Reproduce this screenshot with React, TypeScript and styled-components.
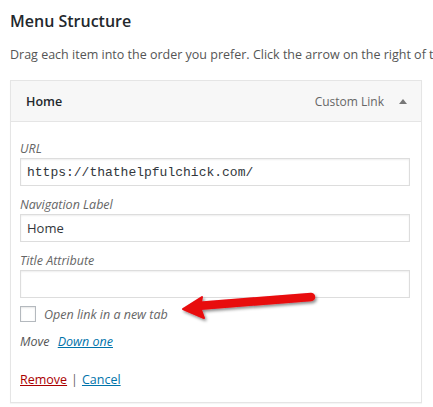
import styled, { createGlobalStyle } from 'styled-components';

const GlobalStyle = createGlobalStyle`
  html, body {
    margin: 0;
    padding: 0;
    background: #fff;
  }
  body {
    font-family: "Open Sans", "Noto Sans", sans-serif;
    color: #23282d;
    overflow: hidden;
  }
`;

const Page = styled.div`
  position: relative;
  width: 433px;
  height: 407px;
  padding: 0 0 0 10px;
  box-sizing: border-box;
  overflow: hidden;
`;

const Heading = styled.h2`
  margin: 0;
  padding-top: 10px;
  font-size: 16px;
  font-weight: 600;
  line-height: 22px;
  color: #23282d;
`;

const Intro = styled.p`
  margin: 14px 0 0;
  font-size: 12.5px;
  line-height: 18px;
  color: #555;
  white-space: nowrap;
`;

const ItemBox = styled.div`
  margin-top: 16px;
  width: 412px;
  border: 1px solid #e5e5e5;
  box-sizing: border-box;
  background: #fff;
  box-shadow: 0 1px 1px rgba(0, 0, 0, 0.04);
`;

const ItemBar = styled.div`
  display: flex;
  align-items: center;
  height: 40px;
  padding: 0 14px 0 15px;
  background: #f7f7f7;
  border-bottom: 1px solid #e5e5e5;
`;

const ItemTitle = styled.span`
  flex: 1;
  font-size: 12.5px;
  font-weight: 600;
  color: #23282d;
`;

const ItemType = styled.span`
  font-size: 12px;
  color: #666;
`;

const Caret = styled.span`
  margin-left: 15px;
  width: 0;
  height: 0;
  border-left: 4px solid transparent;
  border-right: 4px solid transparent;
  border-bottom: 5px solid #777;
`;

const ItemSettings = styled.div`
  padding: 18px 11px 13px 9px;
`;

const Field = styled.label`
  display: block;
  margin-bottom: 10px;
`;

const FieldLabel = styled.span`
  display: block;
  font-size: 12.5px;
  font-style: italic;
  line-height: 18px;
  color: #666;
`;

const TextInput = styled.input<{ $mono?: boolean }>`
  display: block;
  width: 100%;
  height: 28px;
  box-sizing: border-box;
  margin: 0;
  padding: 0 6px;
  border: 1px solid #ddd;
  border-radius: 0;
  box-shadow: inset 0 1px 2px rgba(0, 0, 0, 0.07);
  background: #fff;
  font-family: ${({ $mono }) => ($mono ? '"Liberation Mono", "DejaVu Sans Mono", monospace' : '"Open Sans", sans-serif')};
  font-size: 13px;
  color: #32373c;
  outline: none;
`;

const CheckRow = styled.label`
  display: flex;
  align-items: center;
  gap: 8px;
  height: 18px;
  margin-top: -3px;
`;

const CheckBox = styled.span`
  width: 16px;
  height: 16px;
  box-sizing: border-box;
  border: 1px solid #b4b9be;
  background: #fff;
  box-shadow: inset 0 1px 2px rgba(0, 0, 0, 0.1);
`;

const CheckText = styled.span`
  font-size: 12.5px;
  font-style: italic;
  color: #666;
`;

const MoveRow = styled.div`
  margin-top: 10px;
  font-size: 12.5px;
  font-style: italic;
  color: #555;
  line-height: 18px;
`;

const TextLink = styled.a<{ $danger?: boolean }>`
  color: ${({ $danger }) => ($danger ? '#a00' : '#0073aa')};
  text-decoration: underline;
  cursor: pointer;
`;

const MoveLink = styled(TextLink)`
  margin-left: 5px;
`;

const Actions = styled.div`
  margin-top: 20px;
  font-size: 12.5px;
  line-height: 18px;
  color: #666;
`;

const Sep = styled.span`
  margin: 0 4px;
`;

const Annotation = styled.svg`
  position: absolute;
  left: 175px;
  top: 287px;
  pointer-events: none;
`;

export default function App() {
  return (
    <>
      <GlobalStyle />
      <Page>
        <Heading>Menu Structure</Heading>
        <Intro>Drag each item into the order you prefer. Click the arrow on the right of the item to reveal additional configuration options.</Intro>
        <ItemBox>
          <ItemBar>
            <ItemTitle>Home</ItemTitle>
            <ItemType>Custom Link</ItemType>
            <Caret />
          </ItemBar>
          <ItemSettings>
            <Field>
              <FieldLabel>URL</FieldLabel>
              <TextInput $mono readOnly value="https://thathelpfulchick.com/" />
            </Field>
            <Field>
              <FieldLabel>Navigation Label</FieldLabel>
              <TextInput readOnly value="Home" />
            </Field>
            <Field>
              <FieldLabel>Title Attribute</FieldLabel>
              <TextInput readOnly value="" />
            </Field>
            <CheckRow>
              <CheckBox />
              <CheckText>Open link in a new tab</CheckText>
            </CheckRow>
            <MoveRow>
              Move <MoveLink>Down one</MoveLink>
            </MoveRow>
            <Actions>
              <TextLink $danger>Remove</TextLink>
              <Sep>|</Sep>
              <TextLink>Cancel</TextLink>
            </Actions>
          </ItemSettings>
        </ItemBox>
        <Annotation width="150" height="45" viewBox="0 0 150 45">
          <defs>
            <filter id="arrowShadow" x="-20%" y="-40%" width="140%" height="180%">
              <feDropShadow dx="1.5" dy="2" stdDeviation="1.5" floodColor="#000" floodOpacity="0.45" />
            </filter>
          </defs>
          <g filter="url(#arrowShadow)">
            <path d="M136 10 L22 19" stroke="#e8080c" strokeWidth="8.5" strokeLinecap="round" fill="none" />
            <path d="M8 22 L27 10 L25 20 L29 31 Z" fill="#e8080c" strokeLinejoin="round" stroke="#e8080c" strokeWidth="2" />
          </g>
        </Annotation>
      </Page>
    </>
  );
}
